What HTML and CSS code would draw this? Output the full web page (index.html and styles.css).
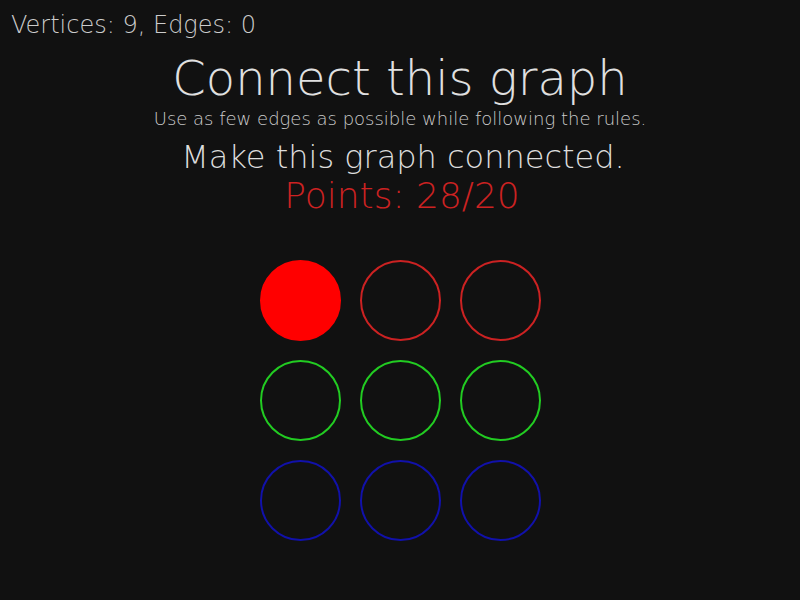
FILE: index.html
```html
<!DOCTYPE html>
<html>
<head>
<meta charset="utf-8">
<link rel="stylesheet" href="styles.css">
</head>
<body>
<div class="stats">Vertices: 9, Edges: 0</div>
<div class="center">
  <h1 class="title">Connect this graph</h1>
  <div class="sub">Use as few edges as possible while following the rules.</div>
  <div class="task">Make this graph connected.</div>
  <div class="points">Points: 28/20</div>
</div>
<div class="grid">
  <div class="node filled"></div>
  <div class="node red"></div>
  <div class="node red"></div>
  <div class="node green"></div>
  <div class="node green"></div>
  <div class="node green"></div>
  <div class="node blue"></div>
  <div class="node blue"></div>
  <div class="node blue"></div>
</div>
</body>
</html>
```
FILE: styles.css
```css
html, body {
  margin: 0;
  padding: 0;
  background: #111111;
  width: 800px;
  height: 600px;
  overflow: hidden;
  font-family: "DejaVu Sans", sans-serif;
  font-weight: 200;
  color: #dddddd;
}
.stats {
  font-size: 24px;
  line-height: 28px;
  padding: 11px 0 0 11px;
  color: #cccccc;
}
.center {
  display: flex;
  flex-direction: column;
  align-items: center;
}
.title {
  margin: 14px 0 0 0;
  font-size: 48px;
  font-weight: 200;
  line-height: 50px;
  color: #e0e0e0;
}
.sub {
  margin-top: 6px;
  font-size: 18px;
  line-height: 20px;
  color: #cccccc;
}
.task {
  margin-top: 10px;
  padding-left: 6px;
  font-size: 32px;
  line-height: 36px;
  color: #dddddd;
}
.points {
  margin-top: 1px;
  padding-left: 4px;
  font-size: 36px;
  line-height: 40px;
  color: #cc2222;
}
.grid {
  display: grid;
  grid-template-columns: repeat(3, 81px);
  grid-auto-rows: 81px;
  gap: 19px;
  width: 281px;
  margin: 44px 0 0 259.5px;
}
.node {
  box-sizing: border-box;
  border-radius: 50%;
  border: 2.5px solid;
}
.filled { background: #ff0000; border-color: #ff0000; }
.red { border-color: #cc2222; }
.green { border-color: #22cc22; }
.blue { border-color: #1111aa; }
```
